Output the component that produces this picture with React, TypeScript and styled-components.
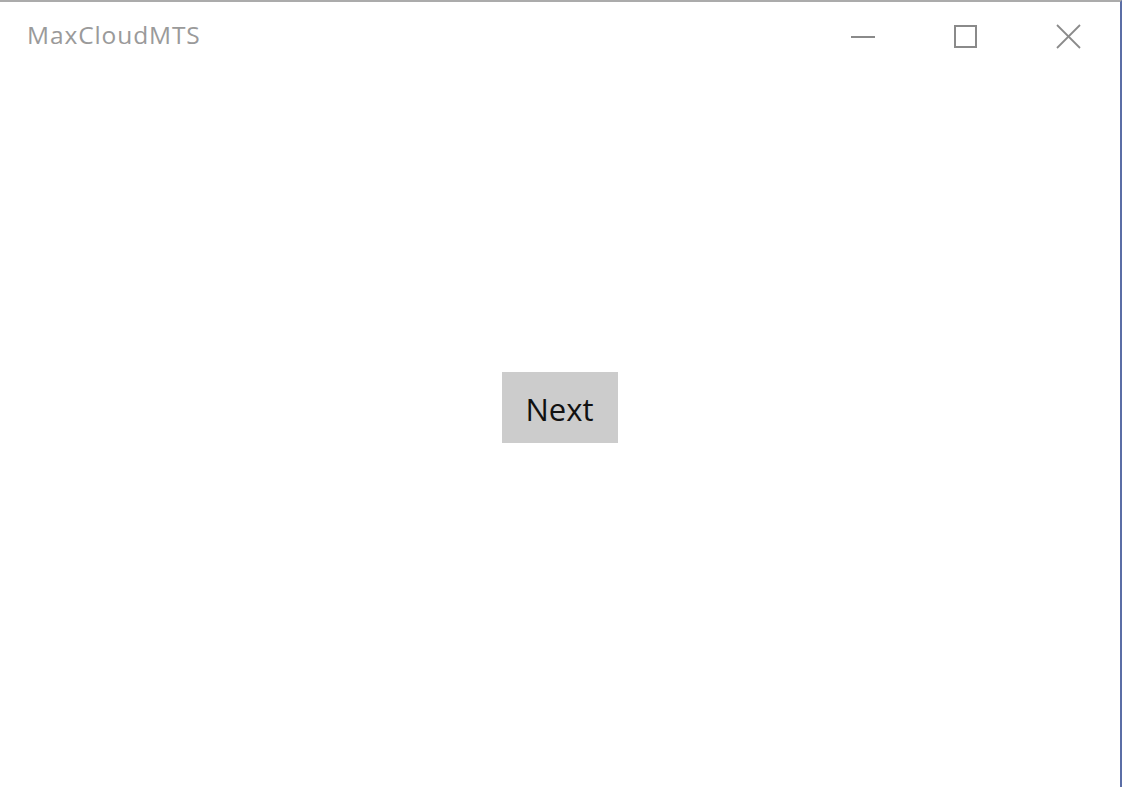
import React from "react";
import styled, { createGlobalStyle } from "styled-components";

const GlobalStyle = createGlobalStyle`
    html, body {
        margin: 0;
        padding: 0;
        height: 100%;
        background: #ffffff;
    }
    #root {
        height: 100%;
    }
`;

export const Window = styled.div`
    box-sizing: border-box;
    width: calc(100% - 1px);
    height: 100vh;
    display: flex;
    flex-direction: column;
    border-top: 2px solid #ababab;
    border-right: 2px solid #5b6ea6;
    background: #ffffff;
    font-family: "Open Sans", "Noto Sans", sans-serif;
`;

export const TitleBar = styled.header`
    height: 72px;
    display: flex;
    flex-direction: row;
    align-items: flex-start;
    flex-shrink: 0;
`;

export const AppTitle = styled.span`
    flex: 1;
    padding-left: 27px;
    padding-top: 16px;
    font-size: 24.5px;
    color: #9a9a9a;
    letter-spacing: 0.9px;
`;

export const CaptionButton = styled.button`
    width: 103px;
    height: 70px;
    border: none;
    background: transparent;
    padding: 0;
    display: flex;
    align-items: center;
    justify-content: center;
    color: #8a8a8a;
`;

export const Content = styled.main`
    flex: 1;
    display: flex;
    align-items: center;
    justify-content: center;
    padding-bottom: 46px;
    padding-right: 1px;
`;

export const NextButton = styled.button`
    width: 116px;
    height: 71px;
    border: none;
    background: #cccccc;
    color: #111111;
    font-family: "Open Sans", "Noto Sans", sans-serif;
    font-size: 31px;
    padding: 3px 0 0;
`;

const MinimizeIcon = () => (
    <svg width="26" height="26" viewBox="0 0 26 26" fill="none" stroke="currentColor" strokeWidth="2">
        <line x1="1" y1="13" x2="25" y2="13" />
    </svg>
);

const MaximizeIcon = () => (
    <svg width="26" height="26" viewBox="0 0 26 26" fill="none" stroke="currentColor" strokeWidth="2">
        <rect x="2" y="2" width="21" height="21" />
    </svg>
);

const CloseIcon = () => (
    <svg width="26" height="26" viewBox="0 0 26 26" fill="none" stroke="currentColor" strokeWidth="1.8">
        <line x1="1" y1="1" x2="24" y2="24" />
        <line x1="24" y1="1" x2="1" y2="24" />
    </svg>
);

const App: React.FC = () => {
    return (
        <>
            <GlobalStyle />
            <Window>
                <TitleBar>
                    <AppTitle>MaxCloudMTS</AppTitle>
                    <CaptionButton aria-label="Minimize"><MinimizeIcon /></CaptionButton>
                    <CaptionButton aria-label="Maximize"><MaximizeIcon /></CaptionButton>
                    <CaptionButton aria-label="Close"><CloseIcon /></CaptionButton>
                </TitleBar>
                <Content>
                    <NextButton>Next</NextButton>
                </Content>
            </Window>
        </>
    );
};

export default App;
